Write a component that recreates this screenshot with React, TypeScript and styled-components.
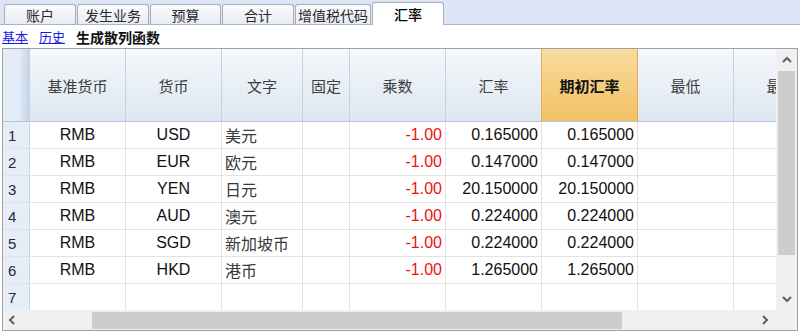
import React from "react";
import styled, { createGlobalStyle, css } from "styled-components";

const GlobalStyle = createGlobalStyle`
  html, body { margin: 0; padding: 0; background: #ffffff; overflow: hidden; }
  body { font-family: "Liberation Sans", "Noto Sans CJK SC", sans-serif; }
  * { box-sizing: border-box; }
`;

const CJK = `"Noto Sans CJK SC", "Liberation Sans", sans-serif`;
const LAT = `"Liberation Sans", "Noto Sans CJK SC", sans-serif`;

const Page = styled.div`
  width: 800px;
  height: 333px;
  display: flex;
  flex-direction: column;
  background: #fff;
`;

const TabBar = styled.div`
  height: 25px;
  background: #dbe5f6;
  border-bottom: 1px solid #a9b4c4;
  display: flex;
  align-items: flex-end;
  padding-left: 4px;
  gap: 1px;
`;

const Tab = styled.div<{ $w: number; $active?: boolean }>`
  width: ${(p) => p.$w}px;
  height: 20px;
  border: 1px solid #a9afb8;
  border-bottom: none;
  border-radius: 3px 3px 0 0;
  background: linear-gradient(#f9fafc, #e8ecf2);
  font-family: ${CJK};
  font-size: 14px;
  color: #2a2a2a;
  display: flex;
  align-items: center;
  justify-content: center;
  ${(p) =>
    p.$active &&
    css`
      height: 23px;
      background: #ffffff;
      margin-bottom: -1px;
      color: #000;
      font-weight: 500;
      padding-bottom: 1px;
    `}
`;

const LinkBar = styled.div`
  height: 23px;
  display: flex;
  align-items: center;
  padding-left: 2px;
  gap: 11px;
  font-family: ${CJK};
  font-size: 13px;
`;

const Link = styled.a`
  color: #1a1ae6;
  text-decoration: underline;
  cursor: pointer;
`;

const Command = styled.span`
  font-weight: 700;
  font-size: 14px;
  color: #111;
`;

const GridFrame = styled.div`
  margin-left: 2px;
  width: 796px;
  height: 283px;
  border: 1px solid #a0a0a0;
  display: grid;
  grid-template-columns: 1fr 21px;
  grid-template-rows: 1fr 20px;
  overflow: hidden;
`;

const TableArea = styled.div`
  overflow: hidden;
`;

const COLS = "27px 96px 96px 81px 47px 96px 96px 96px 96px 96px";

const HeaderRow = styled.div`
  display: grid;
  grid-template-columns: ${COLS};
  height: 73px;
  border-bottom: 1px solid #b3c5dc;
`;

const HeadCell = styled.div<{ $hi?: boolean; $corner?: boolean }>`
  display: flex;
  align-items: center;
  justify-content: center;
  font-family: ${CJK};
  font-size: 15px;
  color: #3c3c3c;
  background: linear-gradient(#f5f8fc, #dde6f1);
  border-right: 1px solid #c3d2e4;
  white-space: nowrap;
  overflow: hidden;
  ${(p) =>
    p.$corner &&
    css`
      background: linear-gradient(90deg, #e4ecf7 60%, #c4d4ea);
    `}
  ${(p) =>
    p.$hi &&
    css`
      background: linear-gradient(#f8dc9e, #f1c163);
      border-left: 1px solid #f0a850;
      border-right: 1px solid #f0a850;
      margin-left: -1px;
      color: #111;
      font-weight: 700;
    `}
`;

const Row = styled.div`
  display: grid;
  grid-template-columns: ${COLS};
  height: 27px;
  border-bottom: 1px solid #e2e2e2;
`;

const Cell = styled.div<{ $align?: "left" | "center" | "right"; $red?: boolean; $cjk?: boolean }>`
  display: flex;
  align-items: center;
  justify-content: ${(p) =>
    p.$align === "left" ? "flex-start" : p.$align === "right" ? "flex-end" : "center"};
  padding: 0 3px 0 3px;
  font-family: ${(p) => (p.$cjk ? CJK : LAT)};
  font-size: 16px;
  color: ${(p) => (p.$red ? "#f01010" : p.$cjk ? "#3a3a3a" : "#111")};
  border-right: 1px solid #e2e2e2;
  white-space: nowrap;
  overflow: hidden;
`;

const NumCell = styled.div`
  display: flex;
  align-items: center;
  padding-left: 5px;
  font-family: ${LAT};
  font-size: 15px;
  color: #2a2a2a;
  background: #e5edf9;
  border-right: 1px solid #c9d6e6;
`;

const VScroll = styled.div`
  background: #f0f0f0;
  display: flex;
  flex-direction: column;
  align-items: center;
`;

const ArrowBox = styled.div<{ $h: number; $w?: number }>`
  height: ${(p) => p.$h}px;
  width: ${(p) => (p.$w ? `${p.$w}px` : "100%")};
  display: flex;
  align-items: center;
  justify-content: center;
  flex-shrink: 0;
`;

const VThumb = styled.div`
  width: 17px;
  height: 184px;
  background: #cdcdcd;
  flex-shrink: 0;
`;

const Spacer = styled.div`
  flex: 1;
`;

const HScroll = styled.div`
  background: #f0f0f0;
  display: flex;
  align-items: center;
`;

const HThumb = styled.div`
  width: 530px;
  height: 17px;
  background: #cdcdcd;
  margin-left: 71px;
`;

const Corner = styled.div`
  background: #f0f0f0;
`;

const Chevron = ({ dir }: { dir: "up" | "down" | "left" | "right" }) => {
  const paths: Record<string, string> = {
    up: "M1 6 L5 2 L9 6",
    down: "M1 2 L5 6 L9 2",
    left: "M6 1 L2 5 L6 9",
    right: "M2 1 L6 5 L2 9",
  };
  const vertical = dir === "up" || dir === "down";
  return (
    <svg width={vertical ? 10 : 8} height={vertical ? 8 : 10} viewBox={vertical ? "0 0 10 8" : "0 0 8 10"}>
      <path d={paths[dir]} fill="none" stroke="#606060" strokeWidth={2} />
    </svg>
  );
};

const tabs = [
  { t: "账户", w: 72 },
  { t: "发生业务", w: 72 },
  { t: "预算", w: 71 },
  { t: "合计", w: 72 },
  { t: "增值税代码", w: 76 },
  { t: "汇率", w: 72, active: true },
];

const headers = ["", "基准货币", "货币", "文字", "固定", "乘数", "汇率", "期初汇率", "最低", "最高"];

const data = [
  ["USD", "美元", "0.165000", "0.165000"],
  ["EUR", "欧元", "0.147000", "0.147000"],
  ["YEN", "日元", "20.150000", "20.150000"],
  ["AUD", "澳元", "0.224000", "0.224000"],
  ["SGD", "新加坡币", "0.224000", "0.224000"],
  ["HKD", "港币", "1.265000", "1.265000"],
];

export default function App() {
  return (
    <Page>
      <GlobalStyle />
      <TabBar>
        {tabs.map((t) => (
          <Tab key={t.t} $w={t.w} $active={t.active}>
            {t.t}
          </Tab>
        ))}
      </TabBar>
      <LinkBar>
        <Link>基本</Link>
        <Link>历史</Link>
        <Command>生成散列函数</Command>
      </LinkBar>
      <GridFrame>
        <TableArea>
          <HeaderRow>
            {headers.map((h, i) => (
              <HeadCell key={i} $corner={i === 0} $hi={h === "期初汇率"}>
                {h}
              </HeadCell>
            ))}
          </HeaderRow>
          {data.map((r, i) => (
            <Row key={i}>
              <NumCell>{i + 1}</NumCell>
              <Cell>RMB</Cell>
              <Cell>{r[0]}</Cell>
              <Cell $align="left" $cjk>
                {r[1]}
              </Cell>
              <Cell />
              <Cell $align="right" $red>
                -1.00
              </Cell>
              <Cell $align="right">{r[2]}</Cell>
              <Cell $align="right">{r[3]}</Cell>
              <Cell />
              <Cell />
            </Row>
          ))}
          <Row>
            <NumCell>7</NumCell>
            <Cell />
            <Cell />
            <Cell />
            <Cell />
            <Cell />
            <Cell />
            <Cell />
            <Cell />
            <Cell />
          </Row>
        </TableArea>
        <VScroll>
          <ArrowBox $h={22}>
            <Chevron dir="up" />
          </ArrowBox>
          <VThumb />
          <Spacer />
          <ArrowBox $h={22}>
            <Chevron dir="down" />
          </ArrowBox>
        </VScroll>
        <HScroll>
          <ArrowBox $h={20} $w={18}>
            <Chevron dir="left" />
          </ArrowBox>
          <HThumb />
          <Spacer />
          <ArrowBox $h={20} $w={22}>
            <Chevron dir="right" />
          </ArrowBox>
        </HScroll>
        <Corner />
      </GridFrame>
    </Page>
  );
}
